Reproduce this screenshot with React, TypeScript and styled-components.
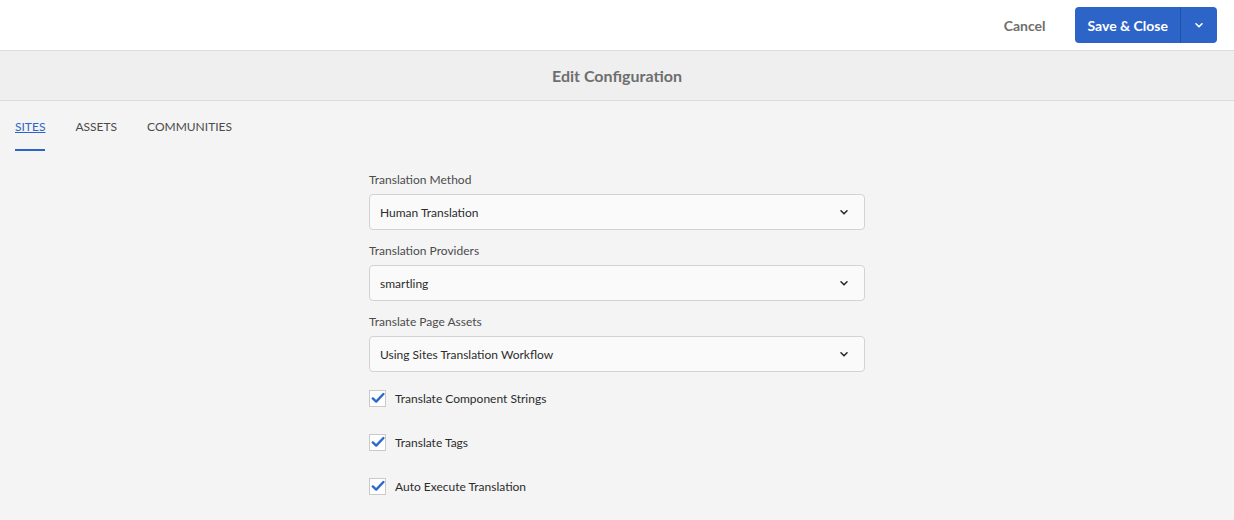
import styled, { createGlobalStyle } from "styled-components";

const GlobalStyle = createGlobalStyle`
  html, body {
    margin: 0;
    padding: 0;
    background: #f4f4f4;
    font-family: Lato, "Noto Sans", sans-serif;
  }
`;

const Page = styled.div`
  width: 1234px;
  height: 520px;
  display: flex;
  flex-direction: column;
  background: #f4f4f4;
  overflow: hidden;
`;

const TopBar = styled.div`
  height: 51px;
  box-sizing: border-box;
  background: #fff;
  border-bottom: 1px solid #dcdcdc;
  display: flex;
  align-items: center;
  justify-content: flex-end;
  padding-right: 17px;
  gap: 30px;
`;

const CancelButton = styled.button`
  background: none;
  border: none;
  font-family: inherit;
  font-size: 14px;
  font-weight: 700;
  color: #6e6e6e;
  padding: 0;
  cursor: pointer;
`;

const SplitButton = styled.div`
  display: flex;
  height: 36px;
  border-radius: 4px;
  overflow: hidden;
  background: #2d64c8;
`;

const SaveButton = styled.button`
  background: none;
  border: none;
  color: #fff;
  font-family: inherit;
  font-size: 14px;
  font-weight: 700;
  white-space: nowrap;
  padding: 0 12px;
  border-right: 1px solid #2050a8;
  cursor: pointer;
`;

const MenuButton = styled.button`
  background: none;
  border: none;
  width: 36px;
  display: flex;
  align-items: center;
  justify-content: center;
  padding: 0;
  cursor: pointer;
`;

const Header = styled.div`
  height: 50px;
  box-sizing: border-box;
  background: #efefef;
  border-bottom: 1px solid #dcdcdc;
  display: flex;
  align-items: center;
  justify-content: center;
  font-size: 16px;
  font-weight: 700;
  color: #6e6e6e;
`;

const Tabs = styled.div`
  display: flex;
  gap: 30px;
  padding: 0 15px;
  height: 50px;
`;

const Tab = styled.div<{ $active?: boolean }>`
  font-size: 12px;
  text-transform: uppercase;
  color: ${(p) => (p.$active ? "#2d64c8" : "#4b4b4b")};
  text-decoration: ${(p) => (p.$active ? "underline" : "none")};
  padding-top: 18px;
  box-sizing: border-box;
  border-bottom: 2px solid ${(p) => (p.$active ? "#2d64c8" : "transparent")};
  height: 50px;
`;

const Form = styled.div`
  width: 496px;
  margin: 20px 0 0 369px;
  display: flex;
  flex-direction: column;
  gap: 12px;
`;

const Label = styled.div`
  font-size: 12px;
  color: #4b4b4b;
  height: 23px;
  line-height: 18px;
`;

const Select = styled.div`
  height: 36px;
  box-sizing: border-box;
  background: #fafafa;
  border: 1px solid #d3d3d3;
  border-radius: 4px;
  display: flex;
  align-items: center;
  justify-content: space-between;
  padding: 0 15px 0 10px;
  font-size: 12px;
  color: #2c2c2c;
`;

const CheckList = styled.div`
  display: flex;
  flex-direction: column;
  margin-top: -8px;
`;

const CheckRow = styled.label`
  display: flex;
  align-items: center;
  gap: 9px;
  height: 44px;
  font-size: 12px;
  color: #2c2c2c;
`;

const Box = styled.span`
  width: 17px;
  height: 17px;
  box-sizing: border-box;
  border: 1px solid #cacaca;
  background: #fff;
  display: flex;
  align-items: center;
  justify-content: center;
`;

const Chevron = ({ color }: { color: string }) => (
  <svg width="10" height="7" viewBox="0 0 10 7">
    <path d="M2 1.8 L5 4.8 L8 1.8" fill="none" stroke={color} strokeWidth="1.6" strokeLinecap="round" strokeLinejoin="round" />
  </svg>
);

const Check = () => (
  <svg width="14" height="12" viewBox="0 0 14 12">
    <path d="M1.8 6.4 L5.2 9.6 L12.4 2" fill="none" stroke="#2b68d0" strokeWidth="2.4" strokeLinecap="round" strokeLinejoin="round" />
  </svg>
);

const fields = [
  { label: "Translation Method", value: "Human Translation" },
  { label: "Translation Providers", value: "smartling" },
  { label: "Translate Page Assets", value: "Using Sites Translation Workflow" },
];

const checks = ["Translate Component Strings", "Translate Tags", "Auto Execute Translation"];

export default function App() {
  return (
    <Page>
      <GlobalStyle />
      <TopBar>
        <CancelButton>Cancel</CancelButton>
        <SplitButton>
          <SaveButton>Save &amp; Close</SaveButton>
          <MenuButton>
            <Chevron color="#fff" />
          </MenuButton>
        </SplitButton>
      </TopBar>
      <Header>Edit Configuration</Header>
      <Tabs>
        <Tab $active>Sites</Tab>
        <Tab>Assets</Tab>
        <Tab>Communities</Tab>
      </Tabs>
      <Form>
        {fields.map((f) => (
          <div key={f.label}>
            <Label>{f.label}</Label>
            <Select>
              <span>{f.value}</span>
              <Chevron color="#2c2c2c" />
            </Select>
          </div>
        ))}
        <CheckList>
          {checks.map((c) => (
            <CheckRow key={c}>
              <Box>
                <Check />
              </Box>
              {c}
            </CheckRow>
          ))}
        </CheckList>
      </Form>
    </Page>
  );
}
